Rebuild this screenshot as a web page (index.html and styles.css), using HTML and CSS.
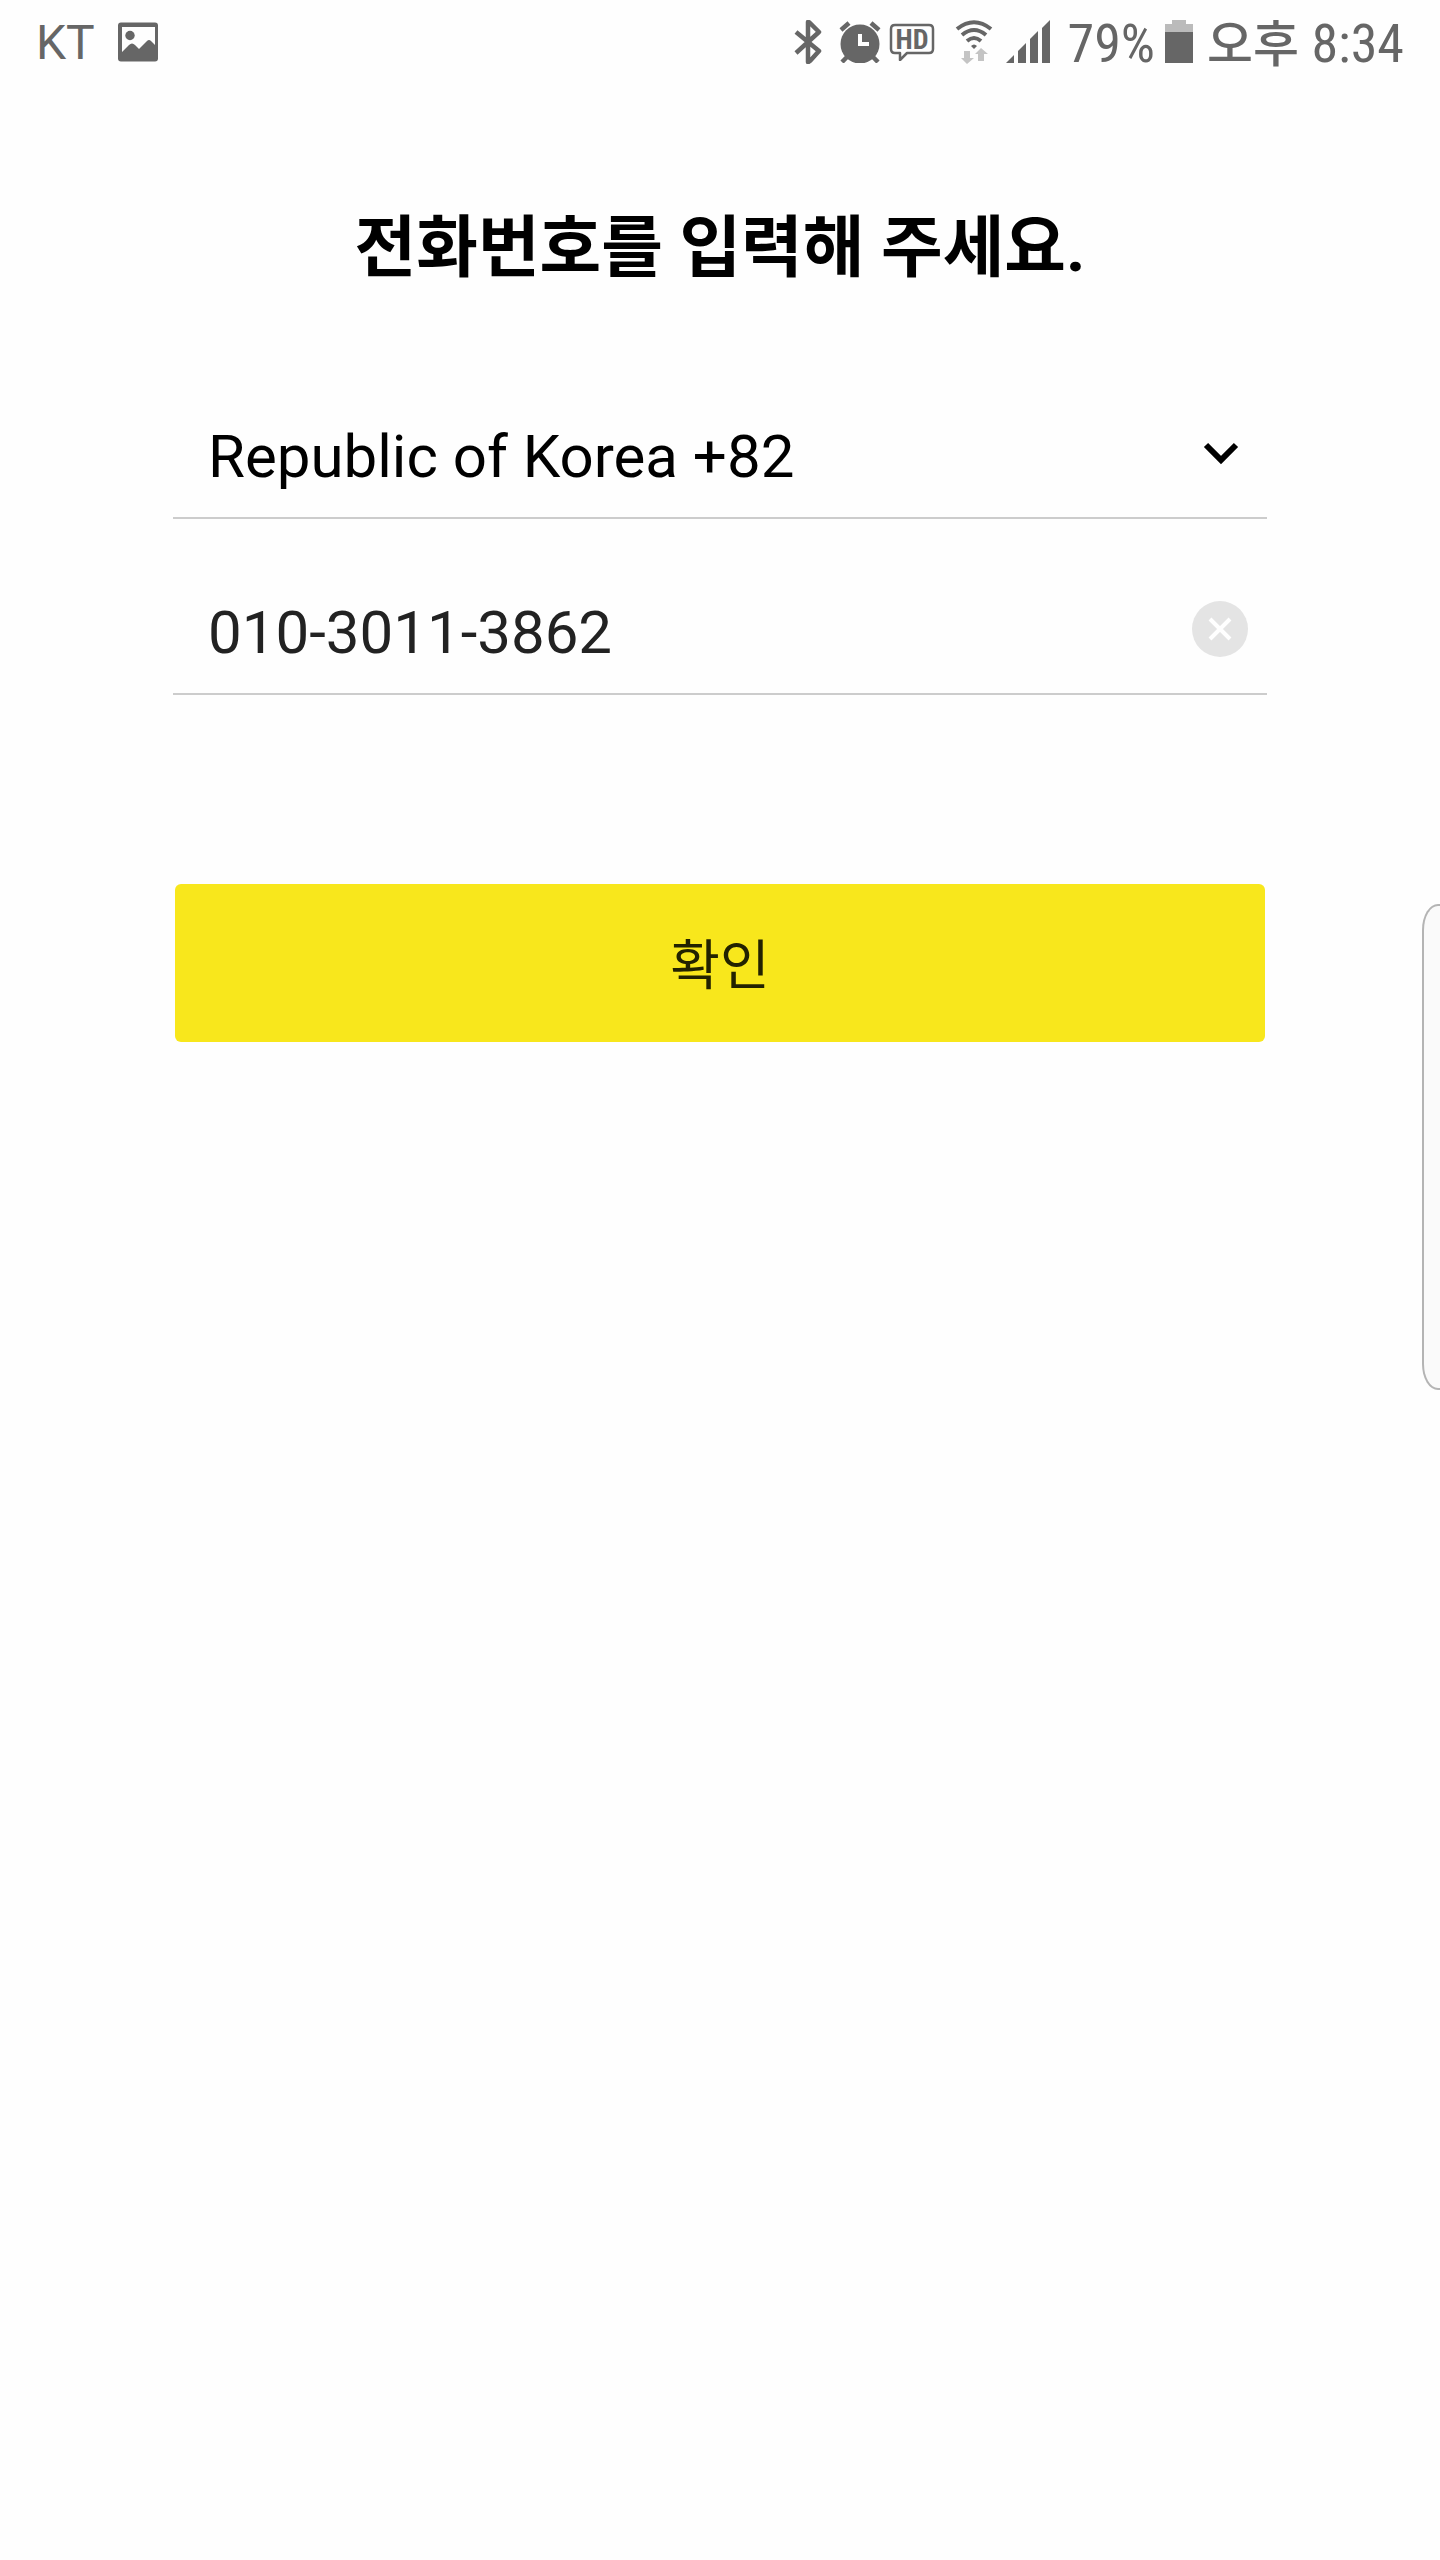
FILE: index.html
```html
<!DOCTYPE html>
<html lang="ko">
<head>
    <meta charset="UTF-8">
    <meta name="viewport" content="width=device-width, initial-scale=1.0">
    <title>전화번호 입력</title>
    <link rel="stylesheet" href="styles.css">
</head>
<body>
    <header class="status">
        <div class="status-left">
            <span class="carrier">KT</span>
            <svg class="icon" width="42" height="40" viewBox="0 0 42 40">
                <path fill-rule="evenodd" d="M4 0.500h34a3 3 0 0 1 3 3v33a3 3 0 0 1-3 3H4a3 3 0 0 1-3-3v-33a3 3 0 0 1 3-3zM5 5v25l7-7q3-3 6 0l4 4 8-8q2-2 4 0l4 4V5z"/>
                <circle cx="13" cy="13.500" r="4.700"/>
            </svg>
        </div>
        <div class="status-right">
            <svg class="icon bluetooth" width="28" height="44" viewBox="0 0 28 44">
                <path class="line" stroke-width="4.500" stroke-linejoin="round" d="M2 12l23 19-9 10q-1 1-2 1V2q1 0 2 1l9 9L2 33"/>
            </svg>
            <svg class="icon alarm" width="42" height="42" viewBox="0 0 42 42">
                <circle cx="21" cy="23" r="19.500"/>
                <path class="line" stroke-width="4.500" d="M2 9l8-7M32 2l8 7M8 36l-5 5M34 36l5 5"/>
                <path d="M19 13h4v8h7v4H19z" fill="#fff"/>
            </svg>
            <svg class="icon hd" width="46" height="38" viewBox="0 0 46 38">
                <path class="line" stroke-width="2.500" stroke-linejoin="round" d="M6 2h34q4 0 4 4v20q0 4-4 4H18l-7 7v-7H6q-4 0-4-4V6q0-4 4-4z"/>
                <text class="hd-text" x="23" y="26" text-anchor="middle">HD</text>
            </svg>
            <svg class="icon wifi" width="38" height="44" viewBox="0 0 38 44">
                <path class="line" stroke-width="4" d="M2 9q17-13.500 34 0M7 15q12-10 24 0M12 21q7-6 14 0"/>
                <path d="M16 26q3-3 6 0l-3 3z"/>
                <path class="faint" d="M9 31h6v7h4l-7 6-6-6h3zM23 41h6v-7h4l-7-6-6 6h3z"/>
            </svg>
            <svg class="icon signal" width="44" height="44" viewBox="0 0 44 44">
                <path d="M0 43l8-8v8zM12 31l8-8v20h-8zM24 19l8-8v32h-8zM36 8l8-8v43h-8z"/>
            </svg>
            <span class="percent">79%</span>
            <svg class="icon battery" width="28" height="44" viewBox="0 0 28 44">
                <path fill="#bbb" d="M7 0h14v4h7v9H0V4h7z"/>
                <path d="M0 12h28v31H0z"/>
            </svg>
            <span class="clock"><span class="ampm">오후</span> 8:34</span>
        </div>
    </header>

    <main class="content">
        <h1 class="title">전화번호를 입력해 주세요.</h1>
        <form class="form">
            <div class="field">
                <select class="input" aria-label="국가">
                    <option>Republic of Korea +82</option>
                </select>
                <svg class="arrow" width="36" height="24" viewBox="0 0 36 24">
                    <path d="M3 4l15 15L33 4"/>
                </svg>
            </div>
            <div class="field">
                <input class="input phone" type="tel" value="010-3011-3862" aria-label="전화번호">
                <button class="clear" type="button" aria-label="지우기">
                    <svg width="56" height="56" viewBox="0 0 56 56">
                        <path d="M18 18l20 20M38 18L18 38"/>
                    </svg>
                </button>
            </div>
            <button class="submit" type="button">확인</button>
        </form>
    </main>

    <div class="edge"></div>
</body>
</html>
```
FILE: styles.css
```css
*{
    box-sizing: border-box;
}
body{
    margin: 0;
    background: #fefefe;
    color: #000;
    font-family: Roboto, "Noto Sans CJK KR", sans-serif;
}
.status{
    display: flex;
    justify-content: space-between;
    height: 84px;
    padding: 0 36px;
    color: #666;
}
.status-left,.status-right{
    display: flex;
    align-items: center;
}
.carrier{
    margin-right: 22px;
    font-size: 48px;
}
.icon{
    flex: none;
    fill: #666;
}
.line{
    fill: none;
    stroke: #666;
}
.faint{
    fill: #c4c4c4;
}
.hd-text{
    font-family: "Roboto Condensed", Roboto, sans-serif;
    font-size: 28px;
    font-weight: 700;
}
.bluetooth{
    margin-right: 17px;
}
.alarm{
    margin-right: 8px;
}
.hd{
    margin-right: 20px;
}
.wifi{
    margin-right: 13px;
}
.signal{
    margin-right: 18px;
}
.percent,.clock{
    padding-top: 4px;
    font-family: "Roboto Condensed", Roboto, "Noto Sans CJK KR", sans-serif;
    font-size: 54px;
    line-height: 80px;
    white-space: nowrap;
}
.percent{
    margin-right: 10px;
}
.battery{
    margin-right: 14px;
}
.ampm{
    font-size: 50px;
    font-weight: 500;
}
.content{
    padding: 114px 173px 0;
}
.title{
    margin: 0;
    font-size: 67px;
    font-weight: 700;
    line-height: 100px;
    text-align: center;
    white-space: nowrap;
}
.form{
    padding-top: 45px;
}
.field{
    display: flex;
    align-items: center;
    position: relative;
    height: 176px;
    padding-top: 50px;
    border-bottom: 2px solid #ccc;
}
.input{
    flex: 1;
    min-width: 0;
    height: 124px;
    padding: 2px 96px 0 35px;
    border: none;
    outline: none;
    appearance: none;
    background: none;
    color: #000;
    font-family: Roboto, sans-serif;
    font-size: 60px;
}
.phone{
    color: #222;
}
.arrow{
    position: absolute;
    right: 28px;
    bottom: 52px;
    fill: none;
    stroke: #000;
    stroke-width: 6px;
    pointer-events: none;
}
.clear{
    position: absolute;
    right: 19px;
    bottom: 36px;
    width: 56px;
    height: 56px;
    padding: 0;
    border: none;
    border-radius: 50%;
    background: #e4e4e4;
}
.clear svg{
    display: block;
    fill: none;
    stroke: #fff;
    stroke-width: 4px;
}
.submit{
    display: block;
    width: calc(100% - 4px);
    height: 158px;
    margin: 189px auto 0;
    padding: 0 0 4px;
    border: none;
    border-radius: 6px;
    background: #f8e71c;
    color: #222200;
    font-family: "Noto Sans CJK KR", sans-serif;
    font-size: 54px;
}
.edge{
    position: absolute;
    top: 904px;
    right: 0;
    width: 18px;
    height: 486px;
    border: 2px solid #b4b4b4;
    border-right: none;
    border-radius: 16px 0 0 16px / 26px 0 0 26px;
    background: #fafafa;
}
```
